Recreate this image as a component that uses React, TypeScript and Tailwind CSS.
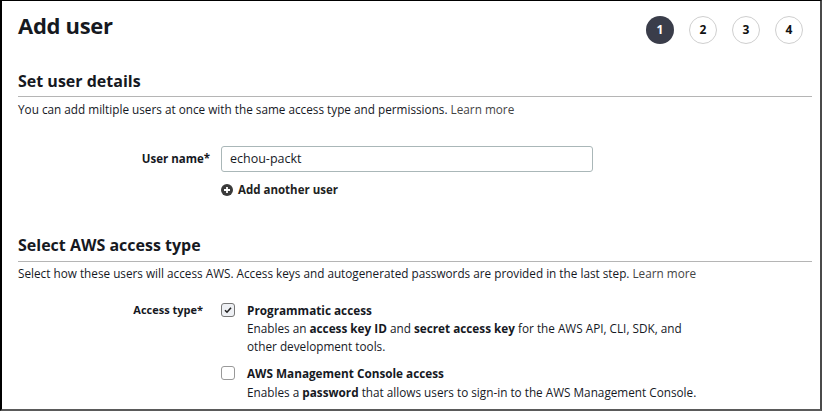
import React from "react";

const font = { fontFamily: '"Open Sans", "Noto Sans", sans-serif' };

function Step({ n, active }: { n: number; active?: boolean }) {
  return (
    <div
      className={
        active
          ? "w-[28px] h-[28px] rounded-full bg-[#3a3d4a] text-white flex items-center justify-center text-[12px] font-bold"
          : "w-[28px] h-[28px] rounded-full border border-[#cfcfcf] bg-white text-[#111] flex items-center justify-center text-[12px] font-bold"
      }
    >
      {n}
    </div>
  );
}

export default function App() {
  return (
    <div
      className="w-[822px] h-[411px] bg-white border-t border-t-black border-l-2 border-l-black border-r-2 border-r-[#4a4a4a] border-b-2 border-b-[#5a5a5a] overflow-hidden text-[#16191f]"
      style={font}
    >
      <div className="pl-[16px] pr-[8px]">
        <div className="flex items-start justify-between pt-[8px]">
          <h1 className="text-[22px] font-bold leading-[32px] tracking-[-0.3px]">Add user</h1>
          <div className="flex gap-[15px] pt-[7px] pr-[9px]">
            <Step n={1} active />
            <Step n={2} />
            <Step n={3} />
            <Step n={4} />
          </div>
        </div>

        <h2 className="mt-[25px] text-[16px] font-bold leading-[24px]">Set user details</h2>
        <div className="mt-[3px] h-px bg-[#b5b5b5]" />
        <p className="mt-[3px] text-[11.75px] leading-[18px]">
          You can add miltiple users at once with the same access type and permissions.{" "}
          <span className="text-[#444]">Learn more</span>
        </p>

        <div className="mt-[28px] flex items-center">
          <div className="w-[192px] text-right text-[11.5px] font-bold">User name*</div>
          <div className="ml-[11px] w-[372px] h-[26px] border border-[#aab7b8] rounded-[3px] flex items-center pl-[8px] text-[12.5px]">
            echou-packt
          </div>
        </div>
        <div className="mt-[9px] ml-[203px] flex items-center gap-[5px] text-[11.5px] font-bold text-[#222] leading-[17px]">
          <svg width="12" height="12" viewBox="0 0 12 12">
            <circle cx="6" cy="6" r="6" fill="#3a3a3a" />
            <path d="M6 3v6M3 6h6" stroke="white" strokeWidth="1.8" />
          </svg>
          Add another user
        </div>

        <h2 className="mt-[35px] text-[16px] font-bold leading-[24px]">Select AWS access type</h2>
        <div className="mt-[4px] h-px bg-[#b5b5b5]" />
        <p className="mt-[2px] text-[11.75px] leading-[18px]">
          Select how these users will access AWS. Access keys and autogenerated passwords are provided in the last step.{" "}
          <span className="text-[#444]">Learn more</span>
        </p>

        <div className="mt-[19px] flex items-start">
          <div className="w-[185px] text-right text-[11px] font-bold leading-[18px]">Access type*</div>
          <div className="ml-[18px] flex flex-col gap-[9px]">
            <div className="flex items-start gap-[12px]">
              <div className="mt-[2px] w-[14px] h-[14px] rounded-[3px] border border-[#777] bg-[#eef0f4] flex items-center justify-center">
                <svg width="10" height="10" viewBox="0 0 10 10">
                  <path d="M2 5.2l2 2 4-4.5" fill="none" stroke="#222" strokeWidth="1.6" />
                </svg>
              </div>
              <div className="text-[11.75px] leading-[18px]">
                <div className="font-bold">Programmatic access</div>
                <div>
                  Enables an <b>access key ID</b> and <b>secret access key</b> for the AWS API, CLI, SDK, and
                  <br />
                  other development tools.
                </div>
              </div>
            </div>
            <div className="flex items-start gap-[12px]">
              <div className="mt-[2px] w-[14px] h-[14px] rounded-[3px] border border-[#999] bg-white" />
              <div className="text-[11.75px] leading-[19px]">
                <div className="font-bold">AWS Management Console access</div>
                <div>
                  Enables a <b>password</b> that allows users to sign-in to the AWS Management Console.
                </div>
              </div>
            </div>
          </div>
        </div>
      </div>
    </div>
  );
}
